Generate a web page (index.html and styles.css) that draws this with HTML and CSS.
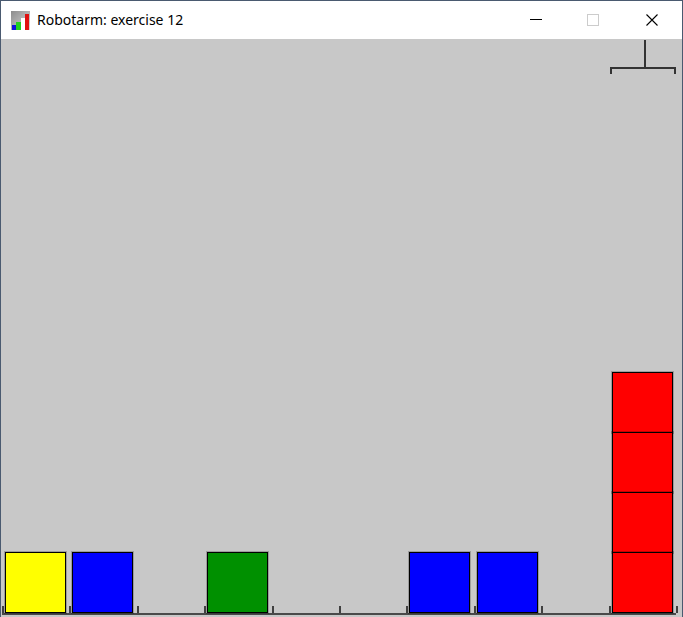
FILE: index.html
```html
<!DOCTYPE html>
<html>
<head>
<meta charset="utf-8">
<title>Robotarm: exercise 12</title>
<link rel="stylesheet" href="styles.css">
</head>
<body>
<div class="window">
  <header class="titlebar">
    <svg class="app-icon" width="19" height="19" viewBox="0 0 19 19">
      <defs>
        <linearGradient id="g" x1="0" y1="0" x2="1" y2="1">
          <stop offset="0" stop-color="#8c8c8c"/>
          <stop offset="1" stop-color="#d8d8d8"/>
        </linearGradient>
      </defs>
      <rect x="0" y="0" width="19" height="19" fill="url(#g)"/>
      <rect x="1" y="14" width="4" height="5" fill="#1010e0"/>
      <rect x="5" y="11" width="5" height="8" fill="#20d020"/>
      <rect x="10" y="7" width="4" height="12" fill="#ffffff"/>
      <rect x="14" y="3" width="4" height="16" fill="#e01010"/>
    </svg>
    <span class="title">Robotarm: exercise 12</span>
    <div class="controls">
      <span class="ctl ctl-min"><svg width="12" height="12" viewBox="0 0 12 12"><line x1="0" y1="6.5" x2="12" y2="6.5" stroke="#000" stroke-width="1"/></svg></span>
      <span class="ctl ctl-max"><svg width="12" height="12" viewBox="0 0 12 12"><rect x="0.5" y="0.5" width="11" height="11" fill="none" stroke="#cccccc" stroke-width="1"/></svg></span>
      <span class="ctl ctl-close"><svg width="12" height="12" viewBox="0 0 12 12"><path d="M0.5 0.5 L11.5 11.5 M11.5 0.5 L0.5 11.5" stroke="#000" stroke-width="1.1" fill="none"/></svg></span>
    </div>
  </header>
  <main class="canvas">
    <svg class="arm" width="70" height="36" viewBox="0 0 70 36">
      <line x1="37" y1="1" x2="37" y2="29" stroke="#333" stroke-width="2"/>
      <line x1="2" y1="29" x2="68" y2="29" stroke="#333" stroke-width="2"/>
      <line x1="3" y1="28" x2="3" y2="35" stroke="#333" stroke-width="2"/>
      <line x1="67" y1="28" x2="67" y2="35" stroke="#333" stroke-width="2"/>
    </svg>
    <div class="floor">
      <div class="slot"><div class="block yellow"></div></div>
      <div class="slot"><div class="block blue"></div></div>
      <div class="slot"></div>
      <div class="slot"><div class="block green"></div></div>
      <div class="slot"></div>
      <div class="slot"></div>
      <div class="slot"><div class="block blue"></div></div>
      <div class="slot"><div class="block blue"></div></div>
      <div class="slot"></div>
      <div class="slot last">
        <div class="block red"></div>
        <div class="block red"></div>
        <div class="block red"></div>
        <div class="block red"></div>
      </div>
    </div>
  </main>
</div>
</body>
</html>
```

FILE: styles.css
```css
html, body {
  margin: 0;
  padding: 0;
  width: 683px;
  height: 617px;
  overflow: hidden;
  background: #c8c8c8;
}

.window {
  width: 683px;
  height: 617px;
  box-sizing: border-box;
  border: 1px solid #4a5a70;
  border-bottom: none;
  display: flex;
  flex-direction: column;
  font-family: "Noto Sans", "Open Sans", "Liberation Sans", sans-serif;
}

.titlebar {
  height: 38px;
  flex: 0 0 38px;
  background: #ffffff;
  display: flex;
  align-items: center;
  position: relative;
}

.app-icon {
  margin-left: 10px;
  display: block;
}

.title {
  margin-left: 7px;
  font-size: 14px;
  color: #000;
  line-height: 1;
  margin-top: -1px;
}

.controls {
  margin-left: auto;
  display: flex;
  height: 38px;
}

.ctl {
  display: flex;
  align-items: center;
  justify-content: center;
  height: 38px;
}

.ctl svg {
  display: block;
  margin-top: -1px;
}

.ctl-min { width: 53px; }
.ctl-min svg { margin-top: -3px; }
.ctl-max { width: 62px; }
.ctl-close { width: 56px; padding-right: 2px; }

.canvas {
  flex: 1 1 auto;
  position: relative;
  background: #c8c8c8;
  display: flex;
  flex-direction: column;
  justify-content: flex-end;
  padding: 0 0 2px 1px;
}

.arm {
  position: absolute;
  left: 607px;
  top: 0;
  display: block;
}

.floor {
  display: grid;
  grid-template-columns: repeat(10, 67.4px);
  align-items: end;
  border-bottom: 2px solid #4a4a4a;
  width: 674px;
  height: 260px;
}

.slot {
  position: relative;
  height: 100%;
  display: flex;
  flex-direction: column-reverse;
  padding-left: 3px;
  box-sizing: border-box;
}

.slot::before {
  content: "";
  position: absolute;
  left: 0;
  bottom: 0;
  width: 2px;
  height: 7px;
  background: #404040;
}

.slot.last::after {
  content: "";
  position: absolute;
  right: -2px;
  bottom: 0;
  width: 2px;
  height: 7px;
  background: #404040;
}

.block {
  width: 61px;
  height: 61px;
  box-sizing: border-box;
  border: 1px solid #000;
  box-shadow: 0 0 0 1px rgba(0, 0, 0, 0.22);
  flex: 0 0 61px;
}

.block + .block {
  margin-bottom: -1px;
}

.yellow { background: #ffff00; }
.blue { background: #0000ff; }
.green { background: #009000; }
.red { background: #ff0000; }
```
